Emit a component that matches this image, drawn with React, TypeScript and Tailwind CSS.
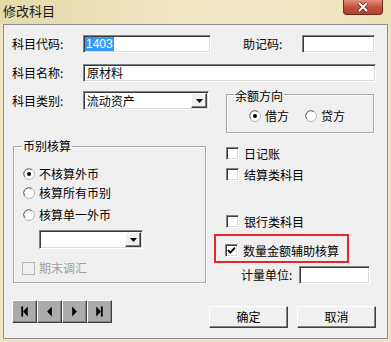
import React from "react";

const sunken =
  "bg-white border border-t-[#828282] border-l-[#828282] border-r-white border-b-white shadow-[inset_1px_1px_0_#3c3c3c,inset_-1px_-1px_0_#dcdcdc]";
const raised =
  "border border-t-white border-l-white border-r-[#404040] border-b-[#404040] shadow-[inset_-1px_-1px_0_#808080]";

function Radio({ checked }: { checked?: boolean }) {
  return (
    <svg width="12" height="12" viewBox="0 0 12 12" className="shrink-0">
      <circle cx="6" cy="6" r="5.5" fill="#fff" stroke="#b4b4b4" />
      <path d="M1.8 8.8 A5 5 0 0 1 8.8 1.8" fill="none" stroke="#6e6e6e" />
      {checked && <circle cx="6" cy="6" r="2" fill="#000" />}
    </svg>
  );
}

function Check({ checked, disabled }: { checked?: boolean; disabled?: boolean }) {
  return (
    <span
      className={`w-[13px] h-[13px] shrink-0 flex items-center justify-center ${
        disabled
          ? "border border-[#b8b8b8] bg-[#f0f0f0]"
          : "bg-white border border-t-[#828282] border-l-[#828282] border-r-white border-b-white shadow-[inset_1px_1px_0_#3c3c3c,inset_-1px_-1px_0_#dcdcdc]"
      }`}
    >
      {checked && (
        <svg width="9" height="9" viewBox="0 0 9 9">
          <polyline points="1,4 3.3,6.6 8,1.6" fill="none" stroke="#000" strokeWidth="1.8" />
        </svg>
      )}
    </span>
  );
}

function Combo({ w, text }: { w: string; text?: string }) {
  return (
    <div className={`${w} h-[19px] ${sunken} flex items-center justify-between pl-[3px] pr-[1px]`}>
      <span className="text-[12px] leading-none">{text}</span>
      <span className={`w-[16px] h-[15px] bg-[#f0f0f0] ${raised} flex items-center justify-center`}>
        <svg width="7" height="4" viewBox="0 0 7 4">
          <polygon points="0,0 7,0 3.5,4" fill="#000" />
        </svg>
      </span>
    </div>
  );
}

function NavBtn({ kind }: { kind: "first" | "prev" | "next" | "last" }) {
  return (
    <button className={`w-[25px] h-[23px] bg-[#ababab] ${raised} flex items-center justify-center`}>
      <svg width="25" height="23" viewBox="0 0 25 23">
        {kind === "first" && (
          <>
            <rect x="9" y="6" width="2" height="11" fill="#000" />
            <polygon points="11,11.5 16,6 16,17" fill="#000" />
          </>
        )}
        {kind === "prev" && <polygon points="10,11.5 15,6 15,17" fill="#000" />}
        {kind === "next" && <polygon points="10,6 15,11.5 10,17" fill="#000" />}
        {kind === "last" && (
          <>
            <polygon points="9,6 14,11.5 9,17" fill="#000" />
            <rect x="14" y="6" width="2" height="11" fill="#000" />
          </>
        )}
      </svg>
    </button>
  );
}

export default function App(): JSX.Element {
  return (
    <div className="w-[391px] h-[342px] flex flex-col bg-[#ede4c2] font-['Noto_Sans_CJK_SC',sans-serif] text-[12px] text-black overflow-hidden">
      {/* title bar */}
      <div className="h-[24px] shrink-0 flex justify-between items-start bg-[linear-gradient(90deg,#e4d9aa,#efe7c3_45%,#f1e9c8_70%,#ebe1b6)]">
        <span className="pl-[3px] pt-[3px] text-[13px] leading-[16px] text-[#1a1a1a]">修改科目</span>
        <button className="mr-[8px] w-[40px] h-[15px] rounded-b-[4px] border border-t-0 border-[#6e2a20] bg-[linear-gradient(180deg,#e2917c,#c8523c_50%,#b4402c)] flex items-center justify-center">
          <svg width="12" height="10" viewBox="0 0 12 10">
            <path d="M2 1 L10 9 M10 1 L2 9" stroke="#5a1e16" strokeWidth="3.4" />
            <path d="M2 1 L10 9 M10 1 L2 9" stroke="#fff" strokeWidth="2" />
          </svg>
        </button>
      </div>

      {/* client area */}
      <div className="flex-1 mx-[3px] mb-[3px] border border-[#8e8e8e] bg-[#f0f0f0] pl-[8px] pt-[10px]">
        <div className="flex items-center h-[18px]">
          <span className="w-[71px]">科目代码:</span>
          <div className={`w-[128px] h-[18px] ${sunken} flex items-center pl-[1px]`}>
            <span className="bg-[#3399ff] text-white font-['Liberation_Sans',sans-serif] text-[12px] leading-[14px] px-[1px]">1403</span>
          </div>
          <span className="ml-[32px] w-[59px]">助记码:</span>
          <div className={`w-[73px] h-[18px] ${sunken}`} />
        </div>

        <div className="flex items-center h-[18px] mt-[11px]">
          <span className="w-[71px]">科目名称:</span>
          <div className={`w-[293px] h-[18px] ${sunken} flex items-center pl-[3px]`}>
            <span className="leading-none">原材料</span>
          </div>
        </div>

        <div className="flex mt-[9px]">
          {/* left column */}
          <div className="w-[197px] flex flex-col">
            <div className="flex items-center h-[19px]">
              <span className="w-[71px]">科目类别:</span>
              <Combo w="w-[127px]" text="流动资产" />
            </div>

            <div className="relative ml-[1px] mt-[36px] w-[193px] h-[137px] border border-[#a8a8a8] shadow-[1px_1px_0_#fff,inset_1px_1px_0_#fff] pl-[9px]">
              <span className="absolute left-[8px] top-[-8px] bg-[#f0f0f0] px-[1px] leading-[14px]">币别核算</span>
              <div className="flex items-center h-[16px] mt-[19px] gap-[4px]">
                <Radio checked />
                <span>不核算外币</span>
              </div>
              <div className="flex items-center h-[16px] mt-[3px] gap-[4px]">
                <Radio />
                <span>核算所有币别</span>
              </div>
              <div className="flex items-center h-[16px] mt-[6px] gap-[4px]">
                <Radio />
                <span>核算单一外币</span>
              </div>
              <div className="mt-[7px] ml-[16px]">
                <Combo w="w-[104px]" />
              </div>
              <div className="flex items-center h-[16px] mt-[11px] gap-[4px] -ml-[1px]">
                <Check disabled />
                <span className="text-[#a0a0a0]">期末调汇</span>
              </div>
            </div>

            <div className="flex mt-[17px]">
              <NavBtn kind="first" />
              <NavBtn kind="prev" />
              <NavBtn kind="next" />
              <NavBtn kind="last" />
            </div>
          </div>

          {/* right column */}
          <div className="w-[167px] flex flex-col">
            <div className="relative ml-[17px] mt-[3px] w-[148px] h-[39px] border border-[#a8a8a8] shadow-[1px_1px_0_#fff,inset_1px_1px_0_#fff] pl-[22px]">
              <span className="absolute left-[7px] top-[-6px] bg-[#f0f0f0] px-[1px] leading-[14px]">余额方向</span>
              <div className="flex items-center h-[16px] mt-[13px]">
                <Radio checked />
                <span className="ml-[4px]">借方</span>
                <span className="ml-[16px]">
                  <Radio />
                </span>
                <span className="ml-[4px]">贷方</span>
              </div>
            </div>

            <div className="flex items-center h-[13px] ml-[17px] mt-[14px] gap-[5px]">
              <Check />
              <span>日记账</span>
            </div>
            <div className="flex items-center h-[13px] ml-[17px] mt-[8px] gap-[5px]">
              <Check />
              <span>结算类科目</span>
            </div>
            <div className="flex items-center h-[13px] ml-[17px] mt-[34px] gap-[5px]">
              <Check />
              <span>银行类科目</span>
            </div>

            <div className="ml-[5px] mt-[6px] w-[135px] h-[29px] border-2 border-[#e5262c] flex items-start pl-[9px] pt-[8px] gap-[5px]">
              <Check checked />
              <span className="leading-[13px]">数量金额辅助核算</span>
            </div>

            <div className="flex items-center h-[18px] mt-[3px] ml-[32px]">
              <span className="w-[58px]">计量单位:</span>
              <div className={`w-[71px] h-[18px] ${sunken}`} />
            </div>

            <div className="flex mt-[22px] gap-[9px]">
              <button className={`w-[79px] h-[22px] bg-[#f0f0f0] ${raised} text-[12px]`}>确定</button>
              <button className={`w-[79px] h-[22px] bg-[#f0f0f0] ${raised} text-[12px]`}>取消</button>
            </div>
          </div>
        </div>
      </div>
    </div>
  );
}
